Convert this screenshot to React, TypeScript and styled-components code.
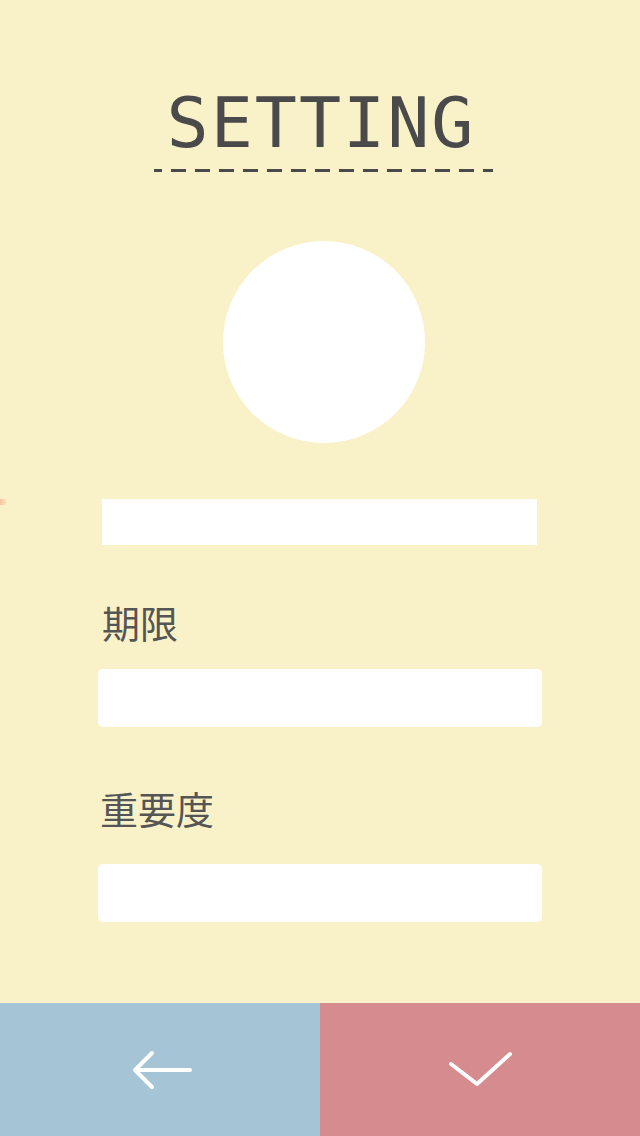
import React from "react";
import styled, { createGlobalStyle } from "styled-components";

const GlobalStyle = createGlobalStyle`
  html, body {
    margin: 0;
    padding: 0;
    background: #f9f2c9;
  }
  * { box-sizing: border-box; }
`;

const Page = styled.div`
  position: relative;
  width: 640px;
  height: 1136px;
  display: grid;
  grid-template-rows: 1003px 133px;
  background: #f9f2c9;
  overflow: hidden;
`;

const Main = styled.main`
  display: flex;
  flex-direction: column;
  align-items: center;
  padding-top: 88px;
`;

const Title = styled.h1`
  margin: 0;
  padding-left: 2px;
  font-family: "DejaVu Sans Mono", "Liberation Mono", monospace;
  font-weight: normal;
  font-size: 70px;
  line-height: 70px;
  letter-spacing: 2px;
  color: #4a4a4a;
`;

const DashRule = styled.div`
  margin-top: 11px;
  margin-left: 7px;
  width: 339px;
  height: 3px;
  background: repeating-linear-gradient(
    to right,
    #4a4a4a 0 15px,
    transparent 15px 24px
  );
  background-position: -7px 0;
`;

const Avatar = styled.div`
  margin-top: 69px;
  margin-left: 8px;
  width: 202px;
  height: 202px;
  border-radius: 50%;
  background: #ffffff;
`;

const Form = styled.div`
  width: 444px;
  display: flex;
  flex-direction: column;
`;

const NameField = styled.div`
  margin-top: 56px;
  margin-left: 4px;
  width: 435px;
  height: 46px;
  background: #ffffff;
`;

const Label = styled.div<{ $top: number; $indent: number }>`
  margin-top: ${(p) => p.$top}px;
  padding-left: ${(p) => p.$indent}px;
  font-family: "Noto Sans CJK JP", "Noto Sans", sans-serif;
  font-weight: 400;
  font-size: 38px;
  line-height: 38px;
  color: #555555;
`;

const Field = styled.div<{ $top: number }>`
  margin-top: ${(p) => p.$top}px;
  width: 444px;
  height: 58px;
  border-radius: 5px;
  background: #ffffff;
`;

const Footer = styled.footer`
  display: grid;
  grid-template-columns: 1fr 1fr;
`;

const FooterButton = styled.button<{ $bg: string; $shift: number }>`
  border: 0;
  margin: 0;
  padding: 0 0 0 ${(p) => p.$shift}px;
  display: flex;
  align-items: center;
  justify-content: center;
  background: ${(p) => p.$bg};
  cursor: pointer;
`;

const Blip = styled.span`
  position: absolute;
  left: 0;
  top: 499px;
  width: 7px;
  height: 6px;
  border-radius: 0 3px 3px 0;
  background: linear-gradient(to right, #f3c49f, rgba(243, 196, 159, 0.2));
`;

export default function App() {
  return (
    <>
      <GlobalStyle />
      <Page>
        <Blip />
        <Main>
          <Title>SETTING</Title>
          <DashRule />
          <Avatar />
          <Form>
            <NameField />
            <Label $top={58} $indent={4}>期限</Label>
            <Field $top={28} />
            <Label $top={62} $indent={2}>重要度</Label>
            <Field $top={37} />
          </Form>
        </Main>
        <Footer>
          <FooterButton $bg="#a5c5d6" $shift={6} aria-label="back">
            <svg width="64" height="40" viewBox="0 0 64 40" fill="none">
              <path
                d="M59 20 H4 M21 3 L4 20 L21 37"
                stroke="#ffffff"
                strokeWidth="4"
                strokeLinecap="round"
                strokeLinejoin="round"
              />
            </svg>
          </FooterButton>
          <FooterButton $bg="#d68b8e" $shift={0} aria-label="confirm">
            <svg width="68" height="40" viewBox="0 0 68 40" fill="none">
              <path
                d="M5 14 L31 34 L64 4"
                stroke="#ffffff"
                strokeWidth="4"
                strokeLinecap="round"
                strokeLinejoin="round"
              />
            </svg>
          </FooterButton>
        </Footer>
      </Page>
    </>
  );
}
